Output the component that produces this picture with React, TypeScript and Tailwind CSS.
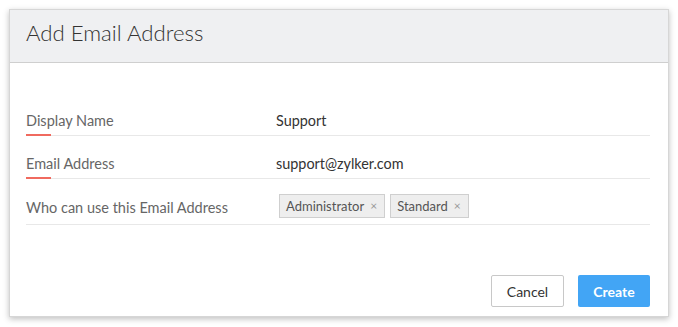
import React from 'react';

const font = { fontFamily: 'Lato, "Open Sans", Arial, sans-serif' };

const Chip = ({ label, first }: { label: string; first?: boolean }) => (
  <span
    className={`flex h-[24px] items-center gap-[6px] border border-[#cfcfcf] bg-[#eeeeee] pl-[6px] pr-[7px] text-[13px] text-[#555] ${
      first ? 'ml-[3px]' : ''
    }`}
  >
    {label}
    <span className="text-[12px] leading-none text-[#999]">×</span>
  </span>
);

const Row = ({
  label,
  required,
  height,
  children,
}: {
  label: string;
  required?: boolean;
  height: string;
  children: React.ReactNode;
}) => (
  <div className={`relative flex items-end border-b border-[#e8e8e8] ${height}`}>
    <div className="w-[250px] text-[14.5px] leading-[20px] text-[#666]">{label}</div>
    <div className="flex items-center gap-[5px] text-[14.4px] leading-[20px] text-[#333]">{children}</div>
    {required && <span className="absolute bottom-[-1px] left-0 h-[2px] w-[25px] bg-[#f06a5f]" />}
  </div>
);

const App = () => {
  return (
    <div className="h-[327px] w-[678px] bg-white p-[9px]" style={font}>
      <div className="flex h-[308px] w-[660px] flex-col border border-[#d6d6d6] bg-white shadow-[0_2px_6px_rgba(0,0,0,0.25)]">
        <div className="flex h-[53px] items-center border-b border-[#cfcfcf] bg-[#eff0f2] px-[16px] pb-[6px]">
          <h1 className="text-[22.2px] font-light text-[#333]">Add Email Address</h1>
        </div>

        <div className="flex flex-col pl-[16px] pr-[18px] pt-[36px]">
          <Row label="Display Name" required height="h-[37px] pb-[4px]">
            Support
          </Row>
          <Row label="Email Address" required height="h-[43px] pb-[4px]">
            support@zylker.com
          </Row>
          <Row label="Who can use this Email Address" height="h-[46px] pb-[6px]">
            <Chip label="Administrator" first />
            <Chip label="Standard" />
          </Row>
        </div>

        <div className="mt-auto flex justify-end gap-[14px] pb-[9px] pr-[18px]">
          <button className="h-[32px] w-[73px] rounded-[2px] border border-[#c8c8c8] bg-white text-[14px] text-[#333]">
            Cancel
          </button>
          <button className="h-[32px] w-[72px] rounded-[2px] bg-[#42a5f5] text-[14px] font-bold text-white">
            Create
          </button>
        </div>
      </div>
    </div>
  );
};

export default App;
